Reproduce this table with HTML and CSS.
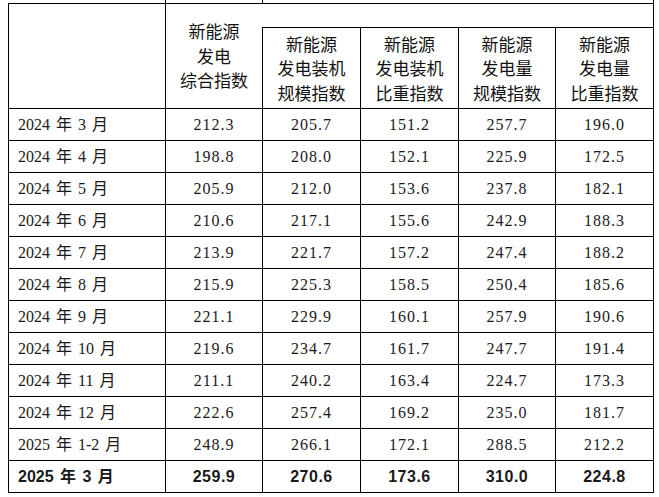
FILE: index.html
```html
<!DOCTYPE html>
<html lang="zh-CN">
<head>
<meta charset="utf-8">
<title>新能源发电指数</title>
<link rel="stylesheet" href="styles.css">
</head>
<body>
<div class="wrap">
<table class="idx">
<colgroup>
<col class="c1"><col class="c2"><col class="c3"><col class="c4"><col class="c5"><col class="c6">
</colgroup>
<thead>
<tr class="cut"><td class="cut-a"></td><td class="cut-b"></td><td class="cut-c" colspan="4"></td></tr>
<tr class="h1">
<th class="blank" rowspan="2"></th>
<th class="main" rowspan="2">新能源<br>发电<br>综合指数</th>
<th class="group" colspan="4"></th>
</tr>
<tr class="h2">
<th class="sub">新能源<br>发电装机<br>规模指数</th>
<th class="sub">新能源<br>发电装机<br>比重指数</th>
<th class="sub">新能源<br>发电量<br>规模指数</th>
<th class="sub">新能源<br>发电量<br>比重指数</th>
</tr>
</thead>
<tbody>
<tr><td class="m">2024 年 3 月</td><td>212.3</td><td>205.7</td><td>151.2</td><td>257.7</td><td>196.0</td></tr>
<tr><td class="m">2024 年 4 月</td><td>198.8</td><td>208.0</td><td>152.1</td><td>225.9</td><td>172.5</td></tr>
<tr><td class="m">2024 年 5 月</td><td>205.9</td><td>212.0</td><td>153.6</td><td>237.8</td><td>182.1</td></tr>
<tr><td class="m">2024 年 6 月</td><td>210.6</td><td>217.1</td><td>155.6</td><td>242.9</td><td>188.3</td></tr>
<tr><td class="m">2024 年 7 月</td><td>213.9</td><td>221.7</td><td>157.2</td><td>247.4</td><td>188.2</td></tr>
<tr><td class="m">2024 年 8 月</td><td>215.9</td><td>225.3</td><td>158.5</td><td>250.4</td><td>185.6</td></tr>
<tr><td class="m">2024 年 9 月</td><td>221.1</td><td>229.9</td><td>160.1</td><td>257.9</td><td>190.6</td></tr>
<tr><td class="m">2024 年 10 月</td><td>219.6</td><td>234.7</td><td>161.7</td><td>247.7</td><td>191.4</td></tr>
<tr><td class="m">2024 年 11 月</td><td>211.1</td><td>240.2</td><td>163.4</td><td>224.7</td><td>173.3</td></tr>
<tr><td class="m">2024 年 12 月</td><td>222.6</td><td>257.4</td><td>169.2</td><td>235.0</td><td>181.7</td></tr>
<tr><td class="m">2025 年 1-2 月</td><td>248.9</td><td>266.1</td><td>172.1</td><td>288.5</td><td>212.2</td></tr>
<tr class="last"><td class="m">2025 年 3 月</td><td>259.9</td><td>270.6</td><td>173.6</td><td>310.0</td><td>224.8</td></tr>
</tbody>
</table>
</div>
</body>
</html>
```
FILE: styles.css
```css
html, body {
  margin: 0;
  padding: 0;
  background: #ffffff;
}
.wrap {
  padding: 0 0 0 8px;
}
.idx {
  border-collapse: collapse;
  table-layout: fixed;
  width: 646px;
  color: #1a1a1a;
  font-family: "Liberation Serif", "Noto Sans CJK SC", serif;
}
.c1 { width: 157px; }
.c2 { width: 97px; }
.c3 { width: 98px; }
.c4 { width: 98px; }
.c5 { width: 97px; }
.c6 { width: 98px; }

.idx td, .idx th {
  border: 1px solid #000;
  padding: 0;
}
.cut td {
  height: 3px;
  border-top: none;
  border-bottom: 1px solid #000;
}
.cut .cut-a { border-left: none; }
.h1 th { height: 23px; }
.h2 th { height: 79px; }
.idx th {
  font-family: "Noto Sans CJK SC", sans-serif;
  font-weight: 400;
  font-size: 17px;
  line-height: 24.5px;
  text-align: center;
  vertical-align: middle;
  color: #111;
}
.idx .main { border-right: none; }
.idx .group { border-left: none; }
.idx .h2 th { padding-top: 1px; }

.idx tbody td {
  height: 31px;
  text-align: center;
  vertical-align: middle;
  font-size: 16px;
  letter-spacing: 1px;
  line-height: 20px;
}
.idx tbody td.m {
  text-align: left;
  padding-left: 9px;
  letter-spacing: 0;
  word-spacing: 2px;
}
.idx tbody .last td {
  font-weight: 700;
  letter-spacing: 0.5px;
  font-family: "Liberation Sans Narrow", "Liberation Sans", "Noto Sans CJK SC", sans-serif;
}
.idx tbody .last td.m {
  letter-spacing: 0;
}
```
